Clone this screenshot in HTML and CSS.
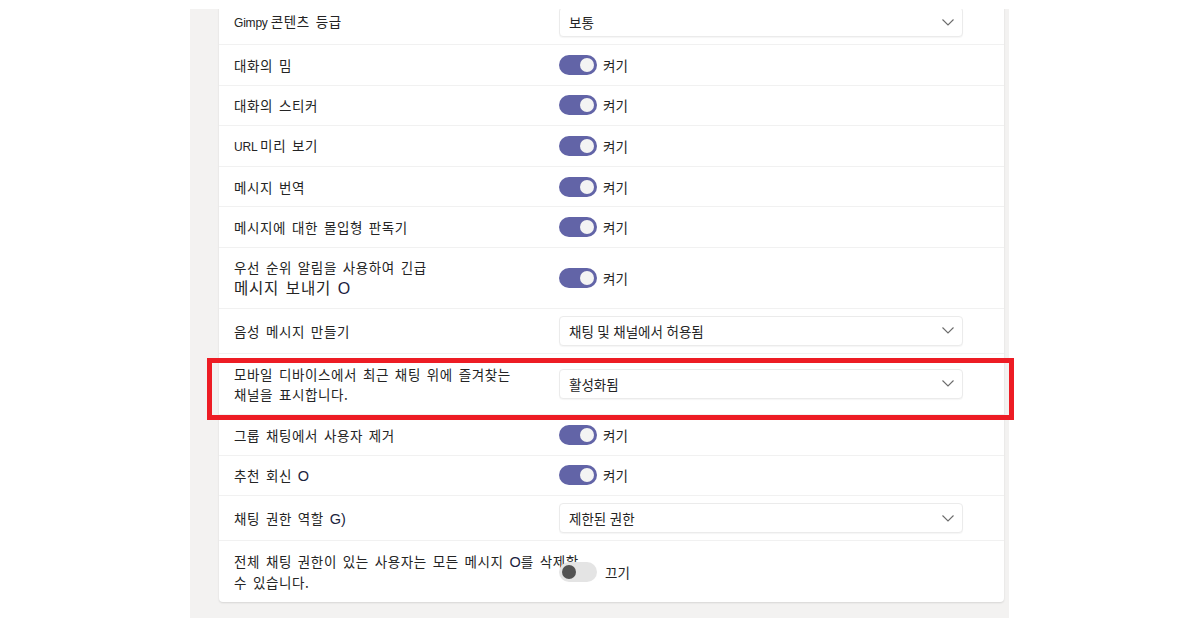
FILE: index.html
```html
<!DOCTYPE html>
<html lang="ko">
<head>
<meta charset="utf-8">
<title>설정</title>
<link rel="stylesheet" href="styles.css">
</head>
<body>
<div class="panel">
  <div class="card">
    <div class="row row-select">
      <div class="label"><span class="lat">Gimpy </span>콘텐츠 등급</div>
      <div class="select"><span>보통</span><svg class="chev" viewBox="0 0 12 7" width="12" height="7"><path d="M0.5 0.5 L6 6 L11.5 0.5" fill="none" stroke="#6b6b6b" stroke-width="1.1"/></svg></div>
    </div>
    <div class="row row-toggle">
      <div class="label">대화의 밈</div>
      <div class="ctl"><span class="toggle on"><span class="knob"></span></span><span class="state">켜기</span></div>
    </div>
    <div class="row row-toggle">
      <div class="label">대화의 스티커</div>
      <div class="ctl"><span class="toggle on"><span class="knob"></span></span><span class="state">켜기</span></div>
    </div>
    <div class="row row-toggle">
      <div class="label"><span class="lat">URL </span>미리 보기</div>
      <div class="ctl"><span class="toggle on"><span class="knob"></span></span><span class="state">켜기</span></div>
    </div>
    <div class="row row-toggle">
      <div class="label">메시지 번역</div>
      <div class="ctl"><span class="toggle on"><span class="knob"></span></span><span class="state">켜기</span></div>
    </div>
    <div class="row row-toggle">
      <div class="label">메시지에 대한 몰입형 판독기</div>
      <div class="ctl"><span class="toggle on"><span class="knob"></span></span><span class="state">켜기</span></div>
    </div>
    <div class="row row-tall">
      <div class="label">우선 순위 알림을 사용하여 긴급<br><span class="big">메시지 보내기 <span class="o">O</span></span></div>
      <div class="ctl"><span class="toggle on"><span class="knob"></span></span><span class="state">켜기</span></div>
    </div>
    <div class="row row-select">
      <div class="label">음성 메시지 만들기</div>
      <div class="select"><span>채팅 및 채널에서 허용됨</span><svg class="chev" viewBox="0 0 12 7" width="12" height="7"><path d="M0.5 0.5 L6 6 L11.5 0.5" fill="none" stroke="#6b6b6b" stroke-width="1.1"/></svg></div>
    </div>
    <div class="row row-tall">
      <div class="label">모바일 디바이스에서 최근 채팅 위에 즐겨찾는<br>채널을 표시합니다.</div>
      <div class="select"><span>활성화됨</span><svg class="chev" viewBox="0 0 12 7" width="12" height="7"><path d="M0.5 0.5 L6 6 L11.5 0.5" fill="none" stroke="#6b6b6b" stroke-width="1.1"/></svg></div>
    </div>
    <div class="row row-toggle">
      <div class="label">그룹 채팅에서 사용자 제거</div>
      <div class="ctl"><span class="toggle on"><span class="knob"></span></span><span class="state">켜기</span></div>
    </div>
    <div class="row row-toggle">
      <div class="label">추천 회신 <span class="o">O</span></div>
      <div class="ctl"><span class="toggle on"><span class="knob"></span></span><span class="state">켜기</span></div>
    </div>
    <div class="row row-select">
      <div class="label">채팅 권한 역할 <span class="o">G)</span></div>
      <div class="select"><span>제한된 권한</span><svg class="chev" viewBox="0 0 12 7" width="12" height="7"><path d="M0.5 0.5 L6 6 L11.5 0.5" fill="none" stroke="#6b6b6b" stroke-width="1.1"/></svg></div>
    </div>
    <div class="row row-tall last">
      <div class="label">전체 채팅 권한이 있는 사용자는 모든 메시지 <span class="o">O</span>를 삭제할<br>수 있습니다.</div>
      <div class="ctl"><span class="toggle off"><span class="knob"></span></span><span class="state off-state">끄기</span></div>
    </div>
  </div>
</div>
<div class="highlight"></div>
</body>
</html>
```

FILE: styles.css
```css
html, body {
  margin: 0;
  padding: 0;
  background: #ffffff;
}
body {
  position: relative;
  width: 1200px;
  height: 628px;
  overflow: hidden;
  font-family: "Open Sans", "Noto Sans CJK KR", sans-serif;
  color: #242424;
  font-size: 14px;
}
.panel {
  margin: 9px 0 0 190px;
  width: 819px;
  height: 609px;
  background: #f3f2f1;
  box-sizing: border-box;
  padding: 0 5px 0 29px;
  overflow: hidden;
}
.card {
  margin-top: -9px;
  background: #ffffff;
  border-radius: 4px;
  box-shadow: 0 1px 2px rgba(0, 0, 0, 0.12);
}
.row {
  display: grid;
  grid-template-columns: 325px 404px;
  align-items: center;
  padding-left: 15px;
  box-sizing: border-box;
  border-bottom: 1px solid #f1f1f1;
}
.row.last {
  border-bottom: none;
}
.row-toggle { height: 40.6px; }
.row-select { height: 45px; }
.row-tall { height: 61px; }
.label {
  font-family: "Noto Sans CJK KR", sans-serif;
  font-size: 13.5px;
  line-height: 20px;
  letter-spacing: 0.6px;
  word-spacing: 1.5px;
  white-space: nowrap;
}
.label .big {
  font-size: 15.5px;
  letter-spacing: 0.8px;
}
.lat {
  font-family: "Liberation Sans", sans-serif;
  font-size: 12px;
  letter-spacing: -0.2px;
  word-spacing: 0;
}
.o {
  font-family: "Liberation Sans", sans-serif;
  font-size: 14.5px;
  letter-spacing: 0;
  color: #1b2340;
}
.big .o {
  font-size: 16px;
}
.ctl {
  display: flex;
  align-items: center;
}
.toggle {
  position: relative;
  width: 38px;
  height: 20px;
  border-radius: 10px;
  display: inline-block;
  flex: none;
}
.toggle.on { background: #6264a7; }
.toggle.off { background: #e4e4e4; }
.knob {
  position: absolute;
  top: 3px;
  width: 14px;
  height: 14px;
  border-radius: 50%;
}
.toggle.on .knob { right: 3px; background: #f3f3f3; }
.toggle.off .knob { left: 3px; background: #535353; }
.state {
  margin-left: 6px;
  font-size: 13.5px;
}
.off-state { margin-left: 8px; }
.select {
  height: 30px;
  box-sizing: border-box;
  border: 1px solid #ebebeb;
  border-radius: 4px;
  box-shadow: 0 1px 1px rgba(0, 0, 0, 0.04);
  display: flex;
  align-items: center;
  justify-content: space-between;
  padding: 0 8px 0 9px;
  font-size: 13.5px;
  background: #fff;
}
.chev { display: block; }
.highlight {
  position: absolute;
  left: 207px;
  top: 358px;
  width: 807px;
  height: 62px;
  box-sizing: border-box;
  border: 5px solid #ed1c24;
}
```
